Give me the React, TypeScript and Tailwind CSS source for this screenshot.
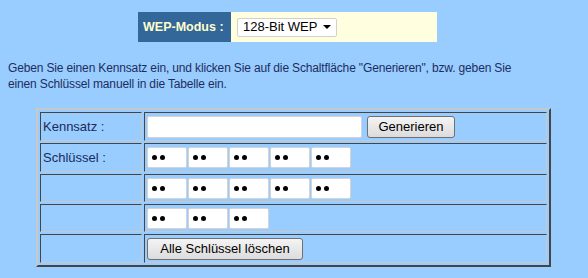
import React from 'react';

const cell = "border border-t-[#454545] border-l-[#454545] border-b-[#c8c8c8] border-r-[#c8c8c8] p-0 align-middle";

const Dots = () => (
  <div className="w-[40px] h-[21px] bg-white border border-[#d4d4d4] rounded-[2px] flex items-center gap-[3px] pl-[4px]">
    <span className="w-[5px] h-[5px] rounded-full bg-black" />
    <span className="w-[5px] h-[5px] rounded-full bg-black" />
  </div>
);

const KeyRow = ({ n }: { n: number }) => (
  <div className="flex gap-[1px]">
    {Array.from({ length: n }).map((_, i) => <Dots key={i} />)}
  </div>
);

const Btn = ({ label, w }: { label: string; w: string }) => (
  <button className={`${w} h-[22px] rounded-[3px] border border-[#707070] bg-gradient-to-b from-[#f4f4f4] to-[#dcdcdc] text-[13px] text-black leading-none`}>
    {label}
  </button>
);

export default function App() {
  const rows: { label: string; h: string; content: React.ReactNode }[] = [
    {
      label: "Kennsatz :",
      h: "h-[27px]",
      content: (
        <div className="flex items-center gap-[5px]">
          <div className="w-[215px] h-[22px] bg-white border border-[#d4d4d4] rounded-[2px]" />
          <Btn label="Generieren" w="w-[88px]" />
        </div>
      ),
    },
    { label: "Schlüssel :", h: "h-[27px]", content: <KeyRow n={5} /> },
    { label: "", h: "h-[26px]", content: <KeyRow n={5} /> },
    { label: "", h: "h-[26px]", content: <KeyRow n={3} /> },
    { label: "", h: "h-[27px]", content: <Btn label="Alle Schlüssel löschen" w="w-[156px]" /> },
  ];

  return (
    <div className="w-[588px] h-[278px] bg-[#99ccff] font-['Liberation_Sans',Arial,sans-serif] text-[13px] text-[#1a2b5c] overflow-hidden">
      <div className="pt-[12px] pl-[138px] flex">
        <div className="w-[93px] h-[30px] bg-[#336699] flex items-center pl-[5px] font-bold text-[12.5px] text-[#ffffcc]">
          WEP-Modus :
        </div>
        <div className="w-[206px] h-[30px] bg-[#ffffe0] flex items-center pl-[6px]">
          <div className="w-[100px] h-[19px] bg-white border border-[#d0d0d0] rounded-[2px] flex items-center justify-between pl-[5px] pr-[5px] text-black">
            <span>128-Bit WEP</span>
            <span className="w-0 h-0 border-l-[4px] border-r-[4px] border-t-[4px] border-l-transparent border-r-transparent border-t-black" />
          </div>
        </div>
      </div>

      <p className="mt-[18px] px-[8px] text-[12px] leading-[16px] tracking-[-0.15px] w-[540px] text-[#1c2e60]">
        Geben Sie einen Kennsatz ein, und klicken Sie auf die Schaltfläche "Generieren", bzw. geben Sie einen Schlüssel manuell in die Tabelle ein.
      </p>

      <table className="mt-[16px] ml-[36px] w-[515px] border-separate border-spacing-[2px] border-2 border-t-[#c8c8c8] border-l-[#c8c8c8] border-b-[#454545] border-r-[#454545]">
        <tbody>
          {rows.map((r, i) => (
            <tr key={i}>
              <td className={`${cell} w-[102px]`}>
                <div className={`${r.h} flex items-center pl-[2px]`}>{r.label}</div>
              </td>
              <td className={cell}>
                <div className={`${r.h} flex items-center pl-[2px]`}>{r.content}</div>
              </td>
            </tr>
          ))}
        </tbody>
      </table>
    </div>
  );
}
